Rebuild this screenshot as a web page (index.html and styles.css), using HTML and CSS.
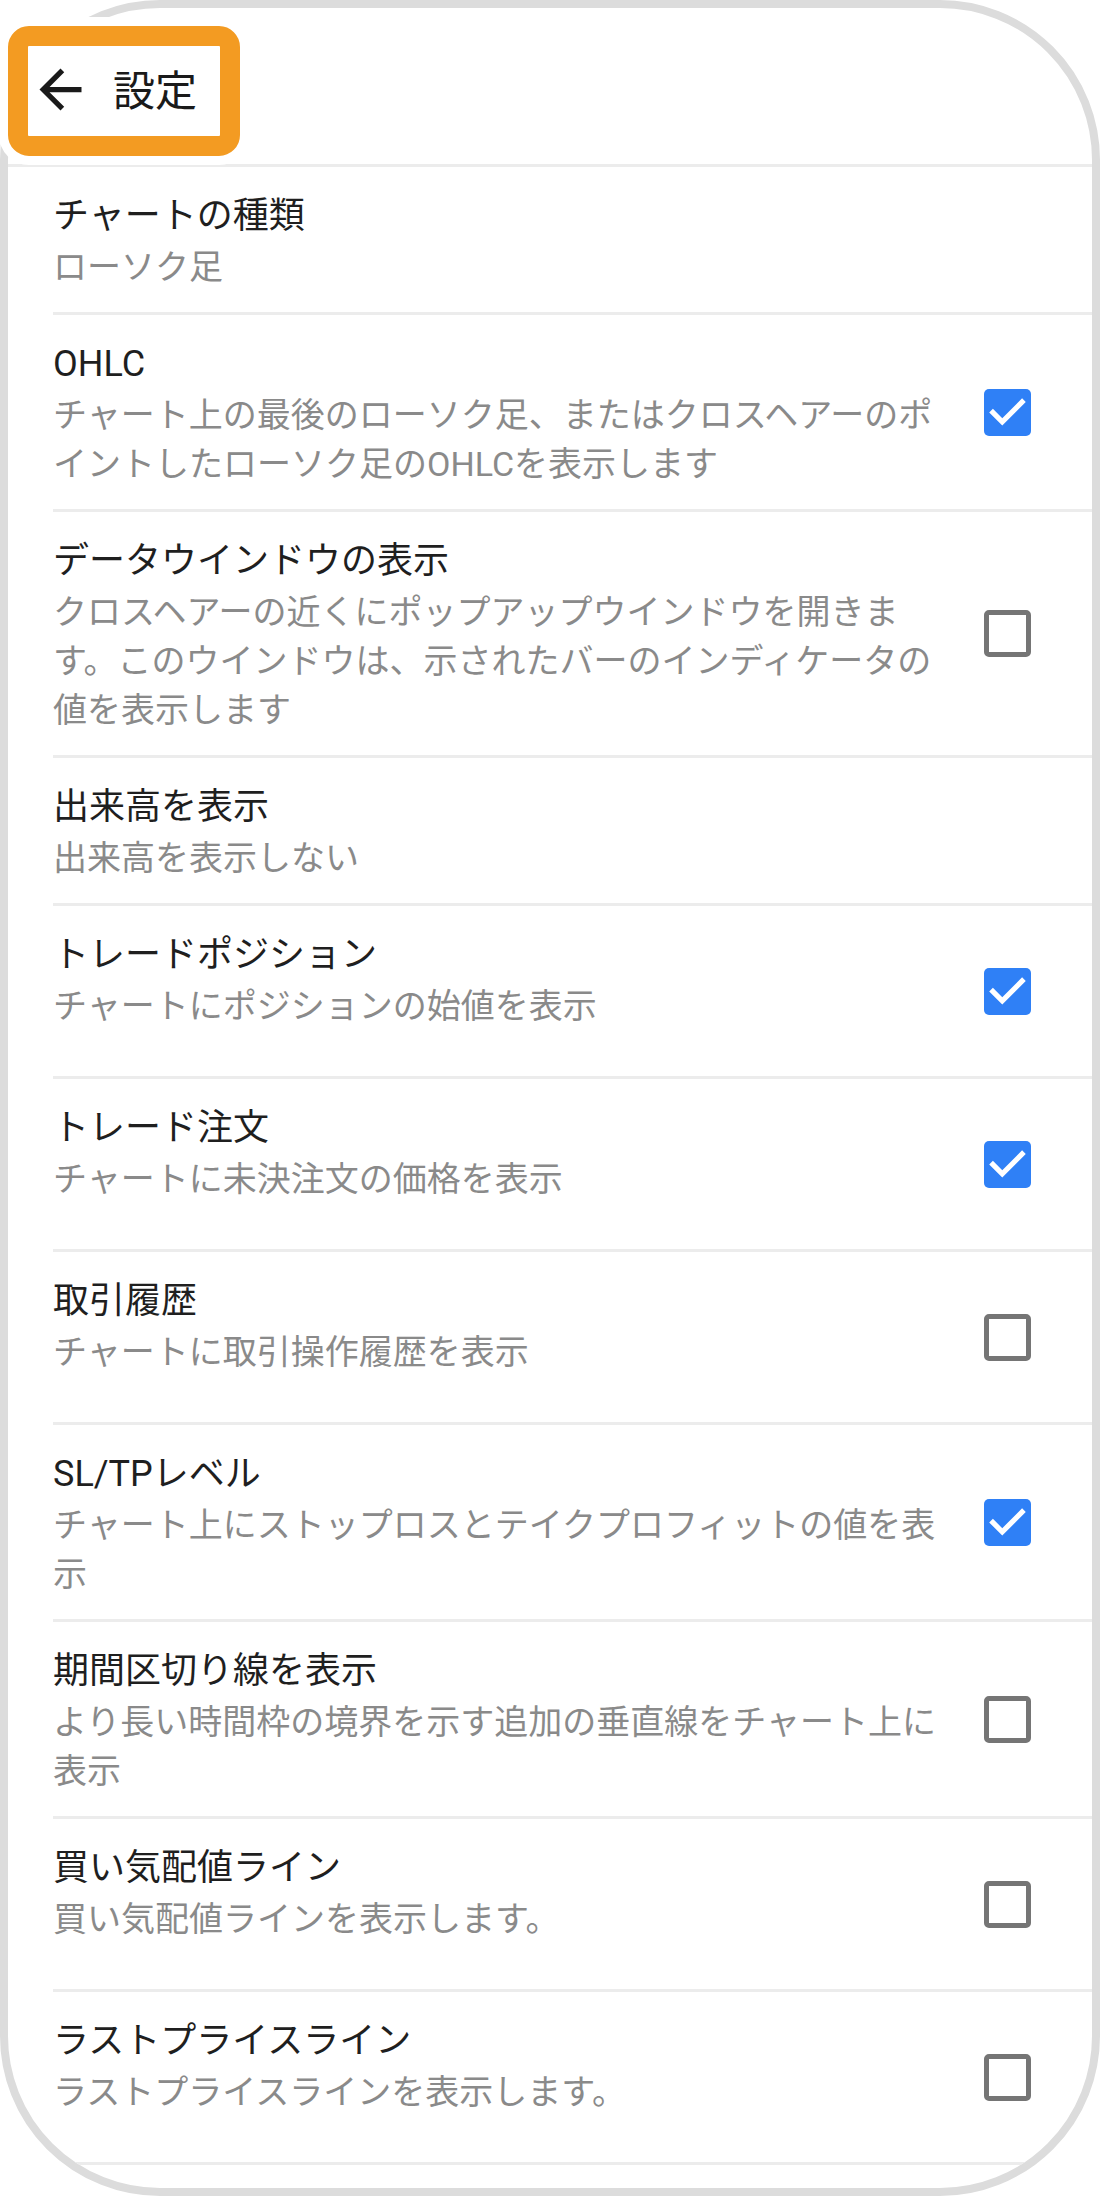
FILE: index.html
```html
<!DOCTYPE html>
<html lang="ja">
<head>
    <meta charset="UTF-8">
    <meta name="viewport" content="width=device-width, initial-scale=1.0">
    <title>設定</title>
    <link rel="stylesheet" href="styles.css">
</head>
<body>

    <div class="page">
        <!-- Phone frame -->
        <div class="phone">
            <header class="topbar">
                <svg class="back" viewBox="0 0 24 24"><path d="M20 11H7.83l5.59-5.59L12 4l-8 8 8 8 1.41-1.41L7.83 13H20v-2z"/></svg>
                <h1>設定</h1>
            </header>

            <ul class="settings">
                <li class="item">
                    <div class="text">
                        <div class="name">チャートの種類</div>
                        <div class="desc">ローソク足</div>
                    </div>
                </li>
                <li class="item">
                    <div class="text">
                        <div class="name">OHLC</div>
                        <div class="desc">チャート上の最後のローソク足、またはクロスヘアーのポイントしたローソク足のOHLCを表示します</div>
                    </div>
                    <div class="check"><span class="box on"><svg viewBox="0 0 18 18"><path d="M7 14L2 9l1.41-1.41L7 11.17l7.59-7.59L16 5z"/></svg></span></div>
                </li>
                <li class="item">
                    <div class="text">
                        <div class="name">データウインドウの表示</div>
                        <div class="desc">クロスヘアーの近くにポップアップウインドウを開きます。このウインドウは、示されたバーのインディケータの値を表示します</div>
                    </div>
                    <div class="check"><span class="box"></span></div>
                </li>
                <li class="item">
                    <div class="text">
                        <div class="name">出来高を表示</div>
                        <div class="desc">出来高を表示しない</div>
                    </div>
                </li>
                <li class="item">
                    <div class="text">
                        <div class="name">トレードポジション</div>
                        <div class="desc">チャートにポジションの始値を表示</div>
                    </div>
                    <div class="check"><span class="box on"><svg viewBox="0 0 18 18"><path d="M7 14L2 9l1.41-1.41L7 11.17l7.59-7.59L16 5z"/></svg></span></div>
                </li>
                <li class="item">
                    <div class="text">
                        <div class="name">トレード注文</div>
                        <div class="desc">チャートに未決注文の価格を表示</div>
                    </div>
                    <div class="check"><span class="box on"><svg viewBox="0 0 18 18"><path d="M7 14L2 9l1.41-1.41L7 11.17l7.59-7.59L16 5z"/></svg></span></div>
                </li>
                <li class="item">
                    <div class="text">
                        <div class="name">取引履歴</div>
                        <div class="desc">チャートに取引操作履歴を表示</div>
                    </div>
                    <div class="check"><span class="box"></span></div>
                </li>
                <li class="item">
                    <div class="text">
                        <div class="name">SL/TPレベル</div>
                        <div class="desc">チャート上にストップロスとテイクプロフィットの値を表示</div>
                    </div>
                    <div class="check"><span class="box on"><svg viewBox="0 0 18 18"><path d="M7 14L2 9l1.41-1.41L7 11.17l7.59-7.59L16 5z"/></svg></span></div>
                </li>
                <li class="item">
                    <div class="text">
                        <div class="name">期間区切り線を表示</div>
                        <div class="desc">より長い時間枠の境界を示す追加の垂直線をチャート上に表示</div>
                    </div>
                    <div class="check"><span class="box"></span></div>
                </li>
                <li class="item">
                    <div class="text">
                        <div class="name">買い気配値ライン</div>
                        <div class="desc">買い気配値ラインを表示します。</div>
                    </div>
                    <div class="check"><span class="box"></span></div>
                </li>
                <li class="item">
                    <div class="text">
                        <div class="name">ラストプライスライン</div>
                        <div class="desc">ラストプライスラインを表示します。</div>
                    </div>
                    <div class="check"><span class="box"></span></div>
                </li>
            </ul>
        </div>

        <!-- Orange callout round the back button -->
        <div class="highlight"></div>
    </div>

</body>
</html>
```

FILE: styles.css
```css
* {
  margin: 0;
  padding: 0;
  box-sizing: border-box;
}

body {
  background-color: #fff;
  color: #1f1f1f;
  font-family: Roboto, "Noto Sans CJK JP", sans-serif;
}

.page {
  position: relative;
  width: 1100px;
  height: 2196px;
}

.phone {
  height: 2196px;
  border: 8px solid #dcdcdc;
  border-radius: 160px;
  overflow: hidden;
  background: #fff;
}

.topbar {
  height: 159px;
  display: flex;
  align-items: center;
  padding: 6px 0 0 21px;
  border-bottom: 3px solid #ececec;
}

/* keep the back button above the callout's white fill */
.back {
  position: relative;
  z-index: 2;
  width: 63px;
  height: 63px;
  fill: #1a1a1a;
}

.topbar h1 {
  position: relative;
  z-index: 2;
  top: 3px;
  font-size: 42px;
  font-weight: 400;
  line-height: 1;
  margin-left: 21px;
  color: #1a1a1a;
}

.settings {
  list-style: none;
  margin-left: 45px;
}

.item {
  display: flex;
  align-items: center;
  padding-right: 61px;
  border-bottom: 3px solid #ececec;
}

.text {
  flex: 1;
  align-self: flex-start;
  padding: 22px 30px 20px 0;
}

.name {
  font-size: 36px;
  line-height: 54px;
  color: #1f1f1f;
}

.desc {
  font-size: 34px;
  line-height: 49px;
  color: #8a8a8a;
}

.check {
  height: 170px;
  display: flex;
  align-items: center;
}

.box {
  display: block;
  width: 47px;
  height: 47px;
  border: 5px solid #757575;
  border-radius: 5px;
}

.box.on {
  border: none;
  background: #2f80f6;
}

.box svg {
  display: block;
  width: 100%;
  height: 100%;
  fill: #fff;
}

.highlight {
  position: absolute;
  z-index: 1;
  left: 8px;
  top: 26px;
  width: 232px;
  height: 130px;
  background: #fff;
  border: 20px solid #f39b22;
  border-radius: 21px;
  box-shadow: 0 0 0 9px #fff; /* white halo over the frame edge */
}
```
